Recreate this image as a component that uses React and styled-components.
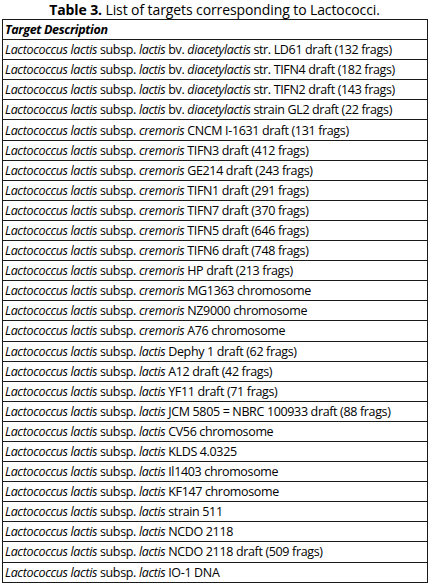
import React from "react";
import styled, { createGlobalStyle } from "styled-components";

const GlobalStyle = createGlobalStyle`
	html, body {
		margin: 0;
		padding: 0;
		background: #fff;
	}
	body {
		font-family: "Open Sans", "Noto Sans", sans-serif;
		color: #000;
	}
`;

const Page = styled.div`
	width: 429px;
	padding: 1px 2px 0 2px;
	box-sizing: border-box;
`;

const Caption = styled.div`
	text-align: center;
	font-size: 14px;
	line-height: 18px;
	height: 18px;
	letter-spacing: -0.1px;

	b {
		font-weight: 700;
	}
`;

const Table = styled.div`
	width: 424px;
	border: 1px solid #1a1a1a;
	border-bottom: none;
	font-size: 12.5px;
	letter-spacing: -0.35px;
`;

const Row = styled.div`
	height: 20.1px;
	box-sizing: border-box;
	border-bottom: 1px solid #1a1a1a;
	padding-left: 2px;
	display: flex;
	align-items: center;
	white-space: nowrap;
	font-weight: ${(p) => (p.$head ? 700 : 400)};
	font-style: ${(p) => (p.$head ? "italic" : "normal")};
`;

const rows = [
	["lactis", "bv. ", "diacetylactis", " str. LD61 draft (132 frags)"],
	["lactis", "bv. ", "diacetylactis", " str. TIFN4 draft (182 frags)"],
	["lactis", "bv. ", "diacetylactis", " str. TIFN2 draft (143 frags)"],
	["lactis", "bv. ", "diacetylactis", " strain GL2 draft (22 frags)"],
	["cremoris", " CNCM I-1631 draft (131 frags)"],
	["cremoris", " TIFN3 draft (412 frags)"],
	["cremoris", " GE214 draft (243 frags)"],
	["cremoris", " TIFN1 draft (291 frags)"],
	["cremoris", " TIFN7 draft (370 frags)"],
	["cremoris", " TIFN5 draft (646 frags)"],
	["cremoris", " TIFN6 draft (748 frags)"],
	["cremoris", " HP draft (213 frags)"],
	["cremoris", " MG1363 chromosome"],
	["cremoris", " NZ9000 chromosome"],
	["cremoris", " A76 chromosome"],
	["lactis", " Dephy 1 draft (62 frags)"],
	["lactis", " A12 draft (42 frags)"],
	["lactis", " YF11 draft (71 frags)"],
	["lactis", " JCM 5805 = NBRC 100933 draft (88 frags)"],
	["lactis", " CV56 chromosome"],
	["lactis", " KLDS 4.0325"],
	["lactis", " Il1403 chromosome"],
	["lactis", " KF147 chromosome"],
	["lactis", " strain 511"],
	["lactis", " NCDO 2118"],
	["lactis", " NCDO 2118 draft (509 frags)"],
	["lactis", " IO-1 DNA"],
];

function Description({ parts }) {
	const [sub, a, b, c] = parts;
	return (
		<span>
			<i>Lactococcus lactis</i> subsp. <i>{sub}</i>
			{b ? (
				<>
					{" "}
					{a}
					<i>{b}</i>
					{c}
				</>
			) : (
				a
			)}
		</span>
	);
}

export default function App() {
	return (
		<>
			<GlobalStyle />
			<Page>
				<Caption>
					<b>Table 3.</b> List of targets corresponding to Lactococci.
				</Caption>
				<Table>
					<Row $head>Target Description</Row>
					{rows.map((r, i) => (
						<Row key={i}>
							<Description parts={r} />
						</Row>
					))}
				</Table>
			</Page>
		</>
	);
}
